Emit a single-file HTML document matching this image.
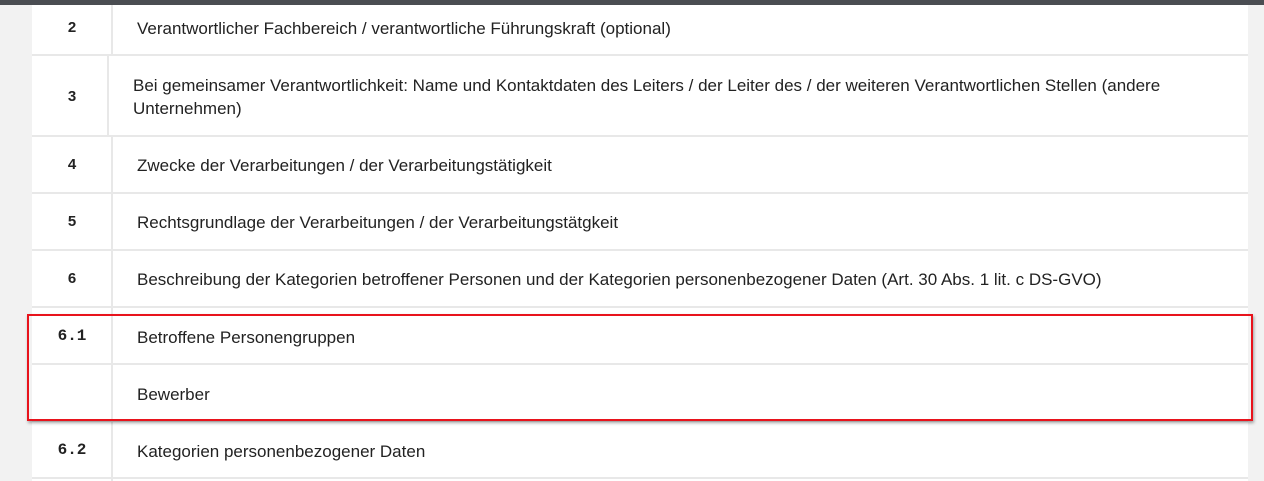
<!DOCTYPE html>
<html><head><meta charset="utf-8"><style>
body{margin:0;width:1264px;height:481px;background:#f2f2f2;position:relative;overflow:hidden;font-family:"Liberation Sans",sans-serif}
.top{position:absolute;left:0;top:0;width:1264px;height:5px;background:#4a4d52}
.tbl{position:absolute;left:32px;top:5px;width:1216px;height:476px;background:#fff}
.h{position:absolute;left:32px;width:1216px;height:2px;background:#e8e8e8}
.v{position:absolute;width:2px;background:#e8e8e8}
.n{position:absolute;left:32px;width:80px;text-align:center;font-weight:bold;font-size:15px;color:#222}
.m{font-family:"Liberation Mono",monospace;font-size:16px}
.t{position:absolute;left:137px;font-size:17px;color:#222;line-height:23px;width:1000px;white-space:nowrap}
.red{position:absolute;left:27px;top:314px;width:1222px;height:103px;border:2px solid #e8131c;box-shadow:1px 2px 3px rgba(0,0,0,.35)}
</style></head><body>
<div class="top"></div>
<div class="tbl"></div>
<div class="h" style="top:54px"></div>
<div class="h" style="top:135px"></div>
<div class="h" style="top:192px"></div>
<div class="h" style="top:249px"></div>
<div class="h" style="top:306px"></div>
<div class="h" style="top:363px"></div>
<div class="h" style="top:420px"></div>
<div class="h" style="top:477px"></div>
<div class="v" style="left:111px;top:5px;height:50px"></div>
<div class="v" style="left:107px;top:56px;height:80px"></div>
<div class="v" style="left:111px;top:137px;height:344px"></div>

<div class="n" style="top:19px">2</div>
<div class="t" style="top:17px">Verantwortlicher Fachbereich / verantwortliche Führungskraft (optional)</div>
<div class="n" style="top:88px">3</div>
<div class="t" style="left:133px;top:74px">Bei gemeinsamer Verantwortlichkeit: Name und Kontaktdaten des Leiters / der Leiter des / der weiteren Verantwortlichen Stellen (andere<br>Unternehmen)</div>
<div class="n" style="top:156px">4</div>
<div class="t" style="top:154px">Zwecke der Verarbeitungen / der Verarbeitungstätigkeit</div>
<div class="n" style="top:213px">5</div>
<div class="t" style="top:211px">Rechtsgrundlage der Verarbeitungen / der Verarbeitungstätgkeit</div>
<div class="n" style="top:270px">6</div>
<div class="t" style="top:268px">Beschreibung der Kategorien betroffener Personen und der Kategorien personenbezogener Daten (Art. 30 Abs. 1 lit. c DS-GVO)</div>
<div class="n m" style="top:327px">6.1</div>
<div class="t" style="top:326px">Betroffene Personengruppen</div>
<div class="t" style="top:383px">Bewerber</div>
<div class="n m" style="top:441px">6.2</div>
<div class="t" style="top:440px">Kategorien personenbezogener Daten</div>
<div class="red"></div>
</body></html>
